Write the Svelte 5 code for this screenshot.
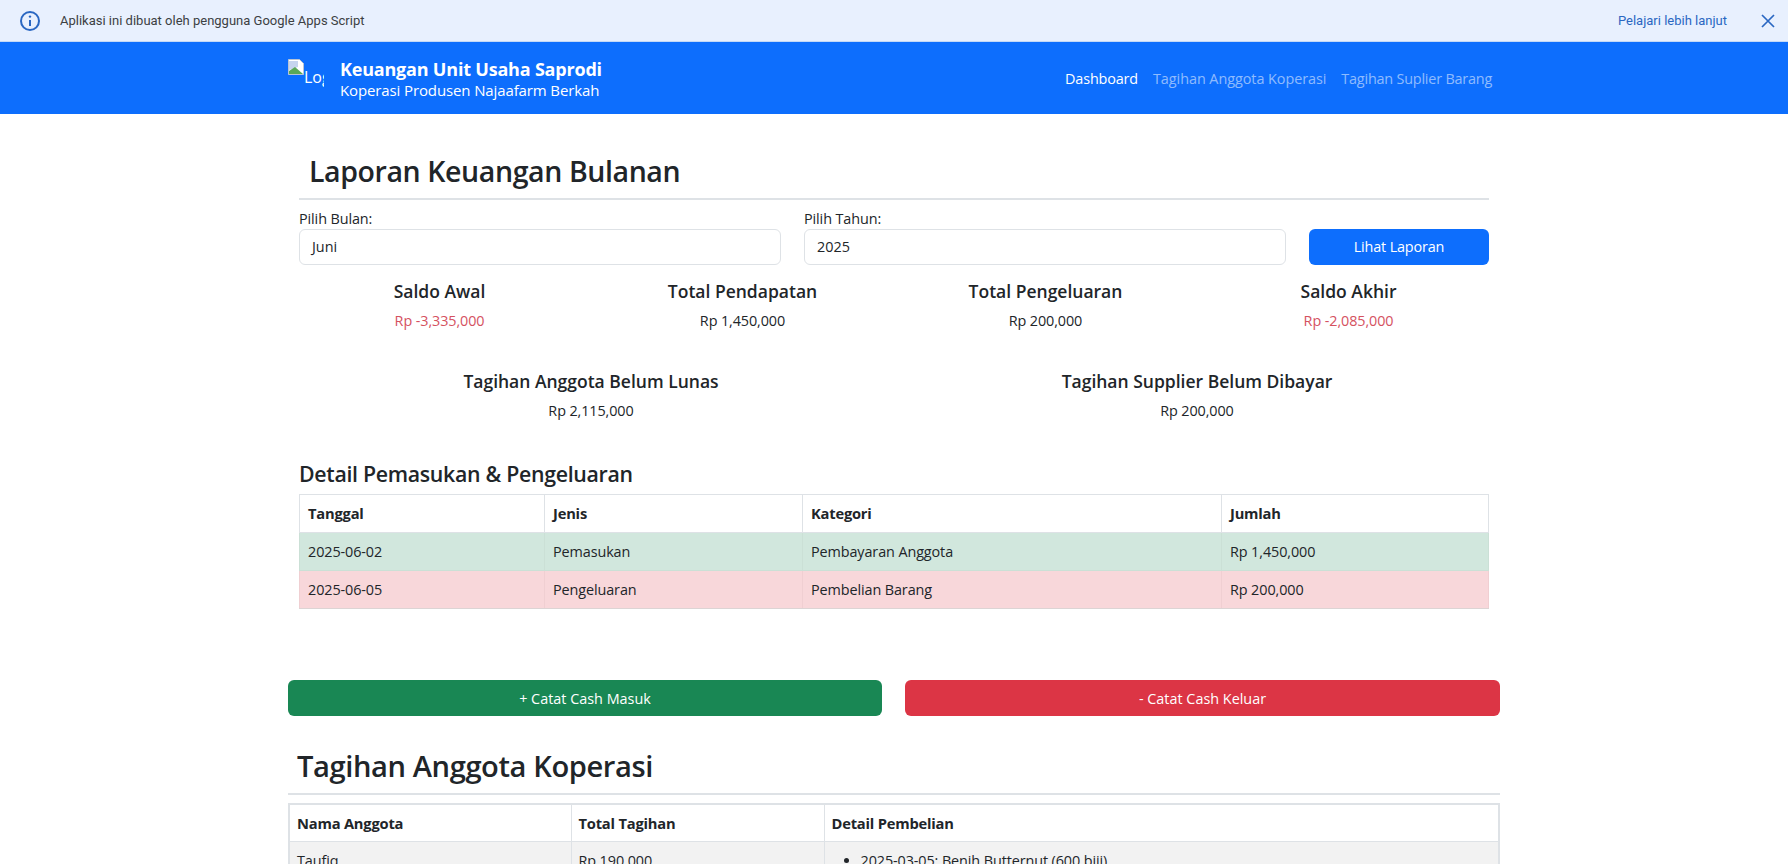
<script>
  const stats = [
    { label: 'Saldo Awal', value: 'Rp -3,335,000', neg: true },
    { label: 'Total Pendapatan', value: 'Rp 1,450,000' },
    { label: 'Total Pengeluaran', value: 'Rp 200,000' },
    { label: 'Saldo Akhir', value: 'Rp -2,085,000', neg: true }
  ];
  const stats2 = [
    { label: 'Tagihan Anggota Belum Lunas', value: 'Rp 2,115,000' },
    { label: 'Tagihan Supplier Belum Dibayar', value: 'Rp 200,000' }
  ];
  const rows = [
    { cls: 'ok', c: ['2025-06-02', 'Pemasukan', 'Pembayaran Anggota', 'Rp 1,450,000'] },
    { cls: 'bad', c: ['2025-06-05', 'Pengeluaran', 'Pembelian Barang', 'Rp 200,000'] }
  ];
</script>

<div class="banner">
  <svg class="info" viewBox="0 0 24 24" width="24" height="24" fill="none" stroke="#2a67c2" stroke-width="2">
    <circle cx="12" cy="12" r="9" />
    <path d="M12 11v6" />
    <circle cx="12" cy="7.6" r="1.2" fill="#2a67c2" stroke="none" />
  </svg>
  <span class="bantext">Aplikasi ini dibuat oleh pengguna Google Apps Script</span>
  <a class="learn" href="#top">Pelajari lebih lanjut</a>
  <svg class="close" viewBox="0 0 14 14" width="14" height="14" fill="none" stroke="#2a67c2" stroke-width="1.7">
    <path d="M1 1l12 12M13 1L1 13" />
  </svg>
</div>

<nav>
  <div class="navin">
    <div class="brand">
      <div class="logo">
        <svg viewBox="0 0 16 16" width="16" height="16">
          <path d="M0.5 0.5h11l4 4v11h-15z" fill="#fff" stroke="#b8c4d4" />
          <path d="M1 2h9v6L1 11z" fill="#c6d4ee" />
          <path d="M1 15v-3l6-4 8 7z" fill="#5aa858" />
        </svg>
        <span class="alt">Logo</span>
      </div>
      <div class="brandtext">
        <div class="t1">Keuangan Unit Usaha Saprodi</div>
        <div class="t2">Koperasi Produsen Najaafarm Berkah</div>
      </div>
    </div>
    <div class="links">
      <a class="active" href="#top">Dashboard</a>
      <a href="#top">Tagihan Anggota Koperasi</a>
      <a href="#top">Tagihan Suplier Barang</a>
    </div>
  </div>
</nav>

<main>
  <section class="report">
    <h2 class="pad">Laporan Keuangan Bulanan</h2>
    <div class="filters">
      <div class="field">
        <span class="lab">Pilih Bulan:</span>
        <div class="input">Juni</div>
      </div>
      <div class="field">
        <span class="lab">Pilih Tahun:</span>
        <div class="input">2025</div>
      </div>
      <button class="primary">Lihat Laporan</button>
    </div>

    <div class="stats four">
      {#each stats as s}
        <div class="stat">
          <h5>{s.label}</h5>
          <p class:neg={s.neg}>{s.value}</p>
        </div>
      {/each}
    </div>
    <div class="stats two">
      {#each stats2 as s}
        <div class="stat">
          <h5>{s.label}</h5>
          <p>{s.value}</p>
        </div>
      {/each}
    </div>

    <h4>Detail Pemasukan &amp; Pengeluaran</h4>
    <table class="detail">
      <colgroup><col class="d1" /><col class="d2" /><col class="d3" /><col /></colgroup>
      <thead><tr><th>Tanggal</th><th>Jenis</th><th>Kategori</th><th>Jumlah</th></tr></thead>
      <tbody>
        {#each rows as r}
          <tr class={r.cls}>{#each r.c as v}<td>{v}</td>{/each}</tr>
        {/each}
      </tbody>
    </table>
  </section>

  <div class="actions">
    <button class="green">+ Catat Cash Masuk</button>
    <button class="red">- Catat Cash Keluar</button>
  </div>

  <h2 class="second">Tagihan Anggota Koperasi</h2>
  <table class="bills">
    <colgroup><col class="b1" /><col class="b2" /><col /></colgroup>
    <thead><tr><th>Nama Anggota</th><th>Total Tagihan</th><th>Detail Pembelian</th></tr></thead>
    <tbody>
      <tr>
        <td>Taufiq</td>
        <td>Rp 190,000</td>
        <td><ul><li>2025-03-05: Benih Butternut (600 biji)</li></ul></td>
      </tr>
    </tbody>
  </table>
</main>

<style>
  :global(html), :global(body) { margin: 0; height: 864px; overflow: hidden; background: #fff; }
  :global(body) {
    font-family: "Open Sans", "Noto Sans", sans-serif;
    font-size: 14.4px;
    color: #212529;
  }
  .banner {
    height: 41px;
    display: flex;
    align-items: center;
    background: #e8f0fe;
    border-bottom: 1px solid #c3d9f7;
    padding: 0 13px 0 18px;
    font-family: Roboto, sans-serif;
    font-size: 13px;
    color: #3c4043;
  }
  .info { margin-right: 18px; }
  .bantext { flex: 1; }
  .learn { color: #2a67c2; text-decoration: none; margin-right: 34px; }
  nav { background: #0d6efd; height: 72px; }
  .navin {
    width: 1212px;
    height: 100%;
    margin: 0 auto;
    display: flex;
    align-items: center;
    justify-content: space-between;
  }
  .brand { display: flex; align-items: center; gap: 16px; }
  .logo {
    width: 36px;
    height: 37px;
    overflow: hidden;
    position: relative;
    color: #fff;
    font-size: 16px;
    line-height: 1;
    margin-bottom: 1px;
  }
  .logo svg { position: absolute; left: 0; top: 0; }
  .alt { position: absolute; left: 16px; top: 10px; white-space: nowrap; }
  .t1 { color: #fff; font-size: 18px; font-weight: 700; line-height: 22px; letter-spacing: -0.2px; margin-top: 2px; }
  .t2 { color: #fff; font-size: 15px; line-height: 21px; letter-spacing: -0.12px; }
  .links { display: flex; gap: 15px; margin-right: 8px; }
  .links a { color: rgba(255,255,255,.55); text-decoration: none; font-size: 14.4px; letter-spacing: -0.05px; }
  .links a:last-child { letter-spacing: -0.2px; }
  .links a.active { color: #fff; letter-spacing: -0.15px; }
  main { width: 1212px; margin: 0 auto; }
  .report { padding: 0 11px; }
  h2 {
    font-weight: 600;
    margin: 0;
    border-bottom: 2px solid #dee2e6;
    letter-spacing: -0.4px;
    line-height: 42px;
  }
  h2.pad { font-size: 28.5px; padding: 36px 10px 6px; }
  .filters {
    display: grid;
    grid-template-columns: 482px 482px 180px;
    column-gap: 23px;
    align-items: end;
    margin-top: 8.5px;
  }
  .field { display: flex; flex-direction: column; }
  .lab { line-height: 19px; height: 20px; letter-spacing: -0.1px; }
  .input {
    height: 34px;
    border: 1px solid #dee2e6;
    border-radius: 6px;
    padding: 0 12px;
    display: flex;
    align-items: center;
    background: #fff;
  }
  button {
    font: inherit;
    color: #fff;
    border: 0;
    border-radius: 6px;
    height: 36px;
    padding: 0;
  }
  .primary { background: #0d6efd; letter-spacing: -0.15px; }
  .stats { display: grid; margin: 0 -11px; text-align: center; }
  .four { grid-template-columns: repeat(4, 1fr); margin-top: 14px; }
  .two { grid-template-columns: repeat(2, 1fr); margin-top: 37.5px; }
  h5 { margin: 0; font-size: 17.5px; font-weight: 600; line-height: 24px; }
  .stat p { margin: 7px 0 0; line-height: 22px; font-size: 14.4px; letter-spacing: -0.1px; }
  .stat p.neg { color: #d5525f; }
  h4 { margin: 36.5px 0 5px; font-size: 21.3px; font-weight: 600; line-height: 30px; letter-spacing: -0.3px; }
  table { border-collapse: collapse; width: 100%; table-layout: fixed; }
  th, td { border: 1px solid #dee2e6; padding: 0 7px; text-align: left; height: 38.3px; box-sizing: border-box; }
  .detail th, .detail td { padding: 0 8px; }
  th { font-weight: 700; font-size: 14.7px; letter-spacing: -0.2px; }
  td { letter-spacing: -0.1px; }
  .d1 { width: 245px; }
  .d2 { width: 258px; }
  .d3 { width: 419px; }
  tr.ok td { background: #d1e7dd; border-color: #cbe0d6; }
  tr.bad td { background: #f8d7da; border-color: #f0cfd2; }
  tbody tr:last-child td { border-bottom-color: #dcd4d4; }
  .actions {
    display: grid;
    grid-template-columns: 594px 595px;
    column-gap: 23px;
    margin-top: 71px;
  }
  .green { background: #198754; }
  .red { background: #dc3545; }
  h2.second { font-size: 29.1px; padding: 29px 9px 6px; }
  .bills { margin-top: 8px; border: 2px solid #dee2e6; }
  .b1 { width: 282px; }
  .b2 { width: 253px; }
  .bills td { background: #f2f2f2; vertical-align: top; padding-top: 9px; padding-bottom: 40px; height: auto; }
  .bills th { height: 37px; }
  ul { margin: 0; padding-left: 29px; }
</style>
